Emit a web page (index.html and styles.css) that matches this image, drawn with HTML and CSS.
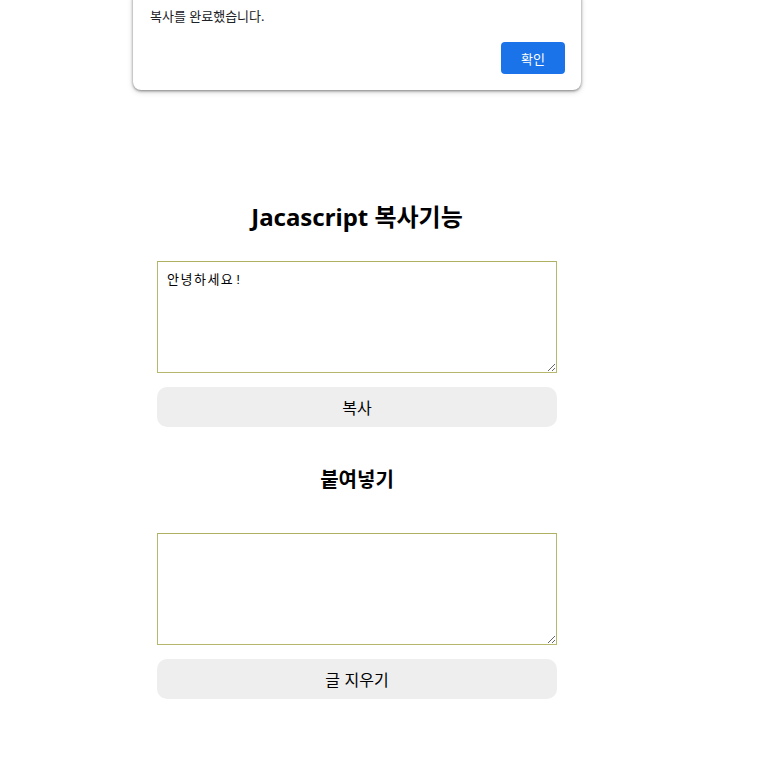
FILE: index.html
```html
<!DOCTYPE html>
<html lang="ko">
<head>
<meta charset="utf-8">
<title>Jacascript 복사기능</title>
<link rel="stylesheet" href="styles.css">
</head>
<body>
<div class="dialog">
  <p class="dialog-msg">복사를 완료했습니다.</p>
  <div class="dialog-actions"><button class="dialog-ok">확인</button></div>
</div>
<main class="wrap">
  <h1 class="title">Jacascript 복사기능</h1>
  <textarea class="box">안녕하세요!</textarea>
  <button class="btn">복사</button>
  <h2 class="subtitle">붙여넣기</h2>
  <textarea class="box"></textarea>
  <button class="btn">글 지우기</button>
</main>
</body>
</html>
```
FILE: styles.css
```css
html, body {
  margin: 0;
  padding: 0;
  background: #fff;
}
body {
  font-family: "Noto Sans", "Noto Sans CJK KR", sans-serif;
  color: #000;
}
.dialog {
  position: absolute;
  top: -10px;
  left: 133px;
  width: 448px;
  box-sizing: border-box;
  padding: 16px;
  background: #fff;
  border-radius: 8px;
  box-shadow: 0 1px 3px rgba(0,0,0,0.45), 0 2px 6px rgba(0,0,0,0.15);
}
.dialog-msg {
  margin: 0 0 16px 1px;
  font-size: 13px;
  line-height: 20px;
  color: #202124;
}
.dialog-actions {
  display: flex;
  justify-content: flex-end;
}
.dialog-ok {
  width: 64px;
  height: 32px;
  border: 0;
  border-radius: 4px;
  background: #1a73e8;
  color: #fff;
  font-family: "Noto Sans CJK KR", sans-serif;
  font-size: 13px;
  padding: 0;
}
.wrap {
  width: 400px;
  margin-left: 157px;
  padding-top: 201px;
  display: flex;
  flex-direction: column;
}
.title {
  margin: 0 0 28px;
  font-size: 24px;
  line-height: 32px;
  font-weight: 700;
  text-align: center;
}
.subtitle {
  margin: 39px 0 39px;
  font-size: 20px;
  line-height: 28px;
  font-weight: 700;
  text-align: center;
}
.box {
  display: block;
  box-sizing: border-box;
  width: 400px;
  height: 112px;
  margin: 0;
  padding: 10px 9px;
  border: 1px solid #b6b86e;
  border-top-color: #aeb062;
  font-family: "Liberation Mono", "Noto Sans CJK KR", monospace;
  font-size: 13px;
  line-height: 18px;
  letter-spacing: 1.5px;
  color: #000;
  resize: vertical;
}
.btn {
  display: block;
  width: 400px;
  height: 40px;
  margin-top: 14px;
  border: 0;
  border-radius: 10px;
  background: #eeeeee;
  font-family: "Noto Sans CJK KR", sans-serif;
  font-size: 16px;
  color: #000;
  padding: 0;
}
```
